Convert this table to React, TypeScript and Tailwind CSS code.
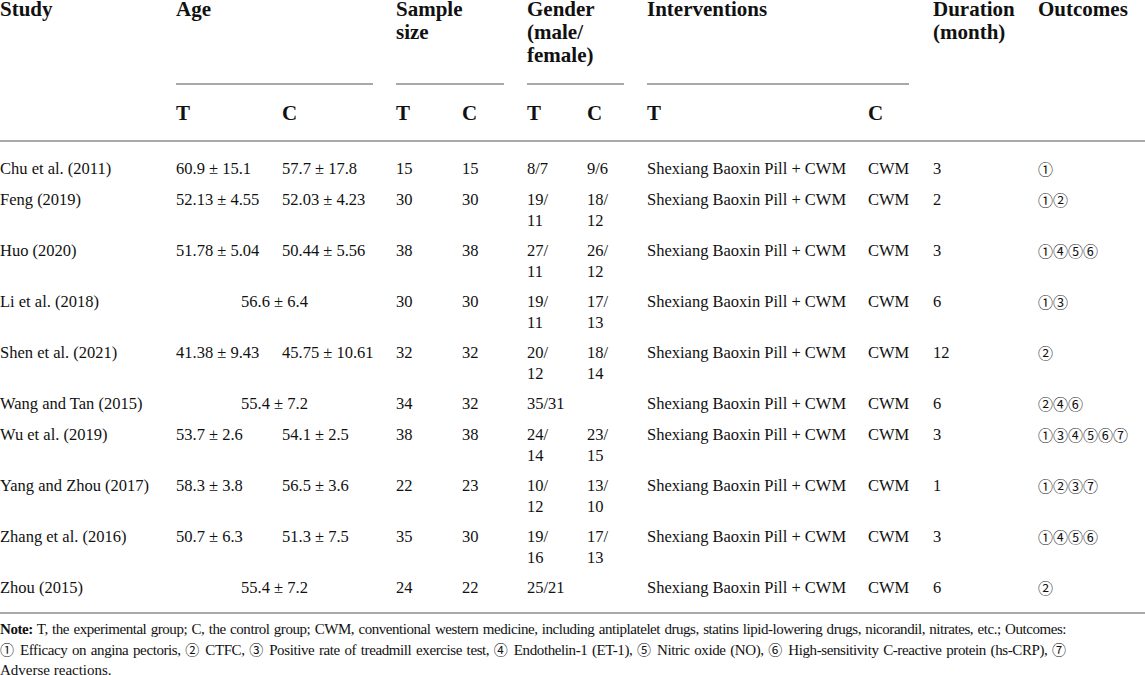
import React from "react";

type Row = {
  study: string;
  ageT?: string;
  ageC?: string;
  ageAll?: string;
  sT: string;
  sC: string;
  gT?: string[];
  gC?: string[];
  gAll?: string;
  dur: string;
  out: string;
};

const rows: Row[] = [
  { study: "Chu et al. (2011)", ageT: "60.9 ± 15.1", ageC: "57.7 ± 17.8", sT: "15", sC: "15", gT: ["8/7"], gC: ["9/6"], dur: "3", out: "①" },
  { study: "Feng (2019)", ageT: "52.13 ± 4.55", ageC: "52.03 ± 4.23", sT: "30", sC: "30", gT: ["19/", "11"], gC: ["18/", "12"], dur: "2", out: "①②" },
  { study: "Huo (2020)", ageT: "51.78 ± 5.04", ageC: "50.44 ± 5.56", sT: "38", sC: "38", gT: ["27/", "11"], gC: ["26/", "12"], dur: "3", out: "①④⑤⑥" },
  { study: "Li et al. (2018)", ageAll: "56.6 ± 6.4", sT: "30", sC: "30", gT: ["19/", "11"], gC: ["17/", "13"], dur: "6", out: "①③" },
  { study: "Shen et al. (2021)", ageT: "41.38 ± 9.43", ageC: "45.75 ± 10.61", sT: "32", sC: "32", gT: ["20/", "12"], gC: ["18/", "14"], dur: "12", out: "②" },
  { study: "Wang and Tan (2015)", ageAll: "55.4 ± 7.2", sT: "34", sC: "32", gAll: "35/31", dur: "6", out: "②④⑥" },
  { study: "Wu et al. (2019)", ageT: "53.7 ± 2.6", ageC: "54.1 ± 2.5", sT: "38", sC: "38", gT: ["24/", "14"], gC: ["23/", "15"], dur: "3", out: "①③④⑤⑥⑦" },
  { study: "Yang and Zhou (2017)", ageT: "58.3 ± 3.8", ageC: "56.5 ± 3.6", sT: "22", sC: "23", gT: ["10/", "12"], gC: ["13/", "10"], dur: "1", out: "①②③⑦" },
  { study: "Zhang et al. (2016)", ageT: "50.7 ± 6.3", ageC: "51.3 ± 7.5", sT: "35", sC: "30", gT: ["19/", "16"], gC: ["17/", "13"], dur: "3", out: "①④⑤⑥" },
  { study: "Zhou (2015)", ageAll: "55.4 ± 7.2", sT: "24", sC: "22", gAll: "25/21", dur: "6", out: "②" },
];

const cols =
  "grid grid-cols-[176px_106px_114px_66px_65px_60px_60px_221px_65px_105px_107px]";

const cell = "pt-[5px] pb-[4px] whitespace-nowrap";

function Circ({ s, size }: { s: string; size: string }) {
  return (
    <span className={`font-['Noto_Sans_CJK_SC',sans-serif] tracking-normal ${size}`}>{s}</span>
  );
}

export default function App() {
  return (
    <div className="w-[1145px] h-[675px] bg-white text-[#111] font-['Liberation_Serif',serif] overflow-hidden">
      {/* Header */}
      <div className={`${cols} font-bold text-[21px] leading-[23px] border-b-2 border-[#a9a9a9]`}>
        <div className="row-span-2">
          <div className="-mt-[2px]">Study</div>
        </div>
        <div className="col-span-2 h-[85px] mr-[23px] border-b-2 border-[#a9a9a9]">
          <div className="-mt-[2px]">Age</div>
        </div>
        <div className="col-span-2 h-[85px] mr-[23px] border-b-2 border-[#a9a9a9]">
          <div className="-mt-[2px]">
            Sample
            <br />
            size
          </div>
        </div>
        <div className="col-span-2 h-[85px] mr-[23px] border-b-2 border-[#a9a9a9]">
          <div className="-mt-[2px]">
            Gender
            <br />
            (male/
            <br />
            female)
          </div>
        </div>
        <div className="col-span-2 h-[85px] mr-[24px] border-b-2 border-[#a9a9a9]">
          <div className="-mt-[2px]">Interventions</div>
        </div>
        <div className="row-span-2">
          <div className="-mt-[2px]">
            Duration
            <br />
            (month)
          </div>
        </div>
        <div className="row-span-2">
          <div className="-mt-[2px]">Outcomes</div>
        </div>
        {["T", "C", "T", "C", "T", "C", "T", "C"].map((l, i) => (
          <div key={i} className="h-[55px] pt-[17px]">
            {l}
          </div>
        ))}
      </div>

      {/* Body */}
      <div className={`${cols} pt-[11px] pb-[9px] text-[16.5px] leading-[21px] border-b-2 border-[#a9a9a9]`}>
        {rows.map((r, i) => (
          <React.Fragment key={i}>
            <div className={cell}>{r.study}</div>
            {r.ageAll ? (
              <div className={`${cell} col-span-2 pr-[23px] text-center`}>{r.ageAll}</div>
            ) : (
              <>
                <div className={cell}>{r.ageT}</div>
                <div className={cell}>{r.ageC}</div>
              </>
            )}
            <div className={cell}>{r.sT}</div>
            <div className={cell}>{r.sC}</div>
            {r.gAll ? (
              <div className={`${cell} col-span-2`}>{r.gAll}</div>
            ) : (
              <>
                <div className={cell}>
                  {r.gT!.map((g, j) => (
                    <div key={j}>{g}</div>
                  ))}
                </div>
                <div className={cell}>
                  {r.gC!.map((g, j) => (
                    <div key={j}>{g}</div>
                  ))}
                </div>
              </>
            )}
            <div className={cell}>Shexiang Baoxin Pill + CWM</div>
            <div className={cell}>CWM</div>
            <div className={cell}>{r.dur}</div>
            <div className={cell}>
              <Circ s={r.out} size="text-[15px]" />
            </div>
          </React.Fragment>
        ))}
      </div>

      {/* Note */}
      <div className="w-[1066px] pt-[5px] text-[15px] leading-[20px] text-justify [text-align-last:justify]">
        <div className="tracking-[-0.45px]">
          <span className="font-bold">Note:</span> T, the experimental group; C, the control group; CWM,
          conventional western medicine, including antiplatelet drugs, statins lipid-lowering drugs,
          nicorandil, nitrates, etc.; Outcomes:
        </div>
        <div className="tracking-[-0.4px]">
          <Circ s="①" size="text-[14px]" /> Efficacy on angina pectoris, <Circ s="②" size="text-[14px]" /> CTFC,{" "}
          <Circ s="③" size="text-[14px]" /> Positive rate of treadmill exercise test,{" "}
          <Circ s="④" size="text-[14px]" /> Endothelin-1 (ET-1), <Circ s="⑤" size="text-[14px]" /> Nitric oxide
          (NO), <Circ s="⑥" size="text-[14px]" /> High-sensitivity C-reactive protein (hs&#8209;CRP),{" "}
          <Circ s="⑦" size="text-[14px]" />
        </div>
        <div className="[text-align-last:left]">Adverse reactions.</div>
      </div>
    </div>
  );
}
